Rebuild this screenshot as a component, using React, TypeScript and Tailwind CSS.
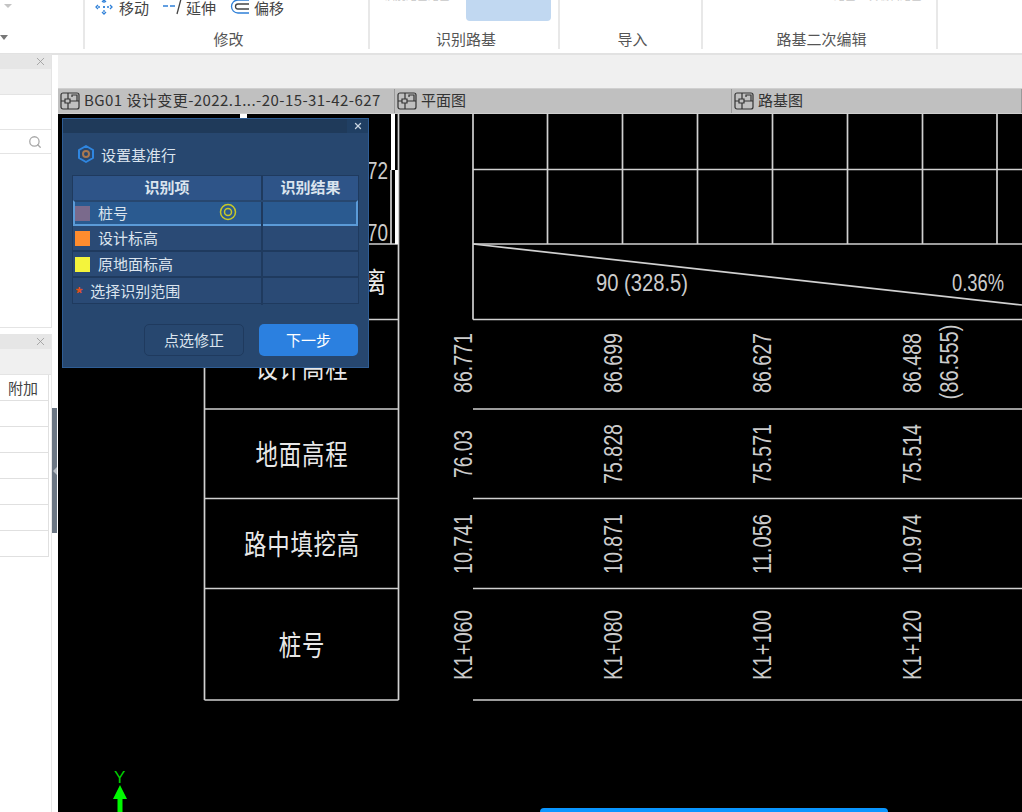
import { Search, X } from "lucide-react";

const FONT = "font-['Noto_Sans_CJK_SC','Noto_Sans',sans-serif]";

const groups = [
  { label: "修改", width: "w-[285px]" },
  { label: "识别路基", width: "w-[190px]" },
  { label: "导入", width: "w-[143px]" },
  { label: "路基二次编辑", width: "w-[235px]" },
];

const tabs = [
  { label: "BG01 设计变更-2022.1...-20-15-31-42-627", width: "w-[337px] tracking-[0.44px]" },
  { label: "平面图", width: "w-[337px]" },
  { label: "路基图", width: "flex-1" },
];

const rows = [
  { label: "桩号", color: "bg-[#7a6a8c]", active: true },
  { label: "设计标高", color: "bg-[#ff8c2e]" },
  { label: "原地面标高", color: "bg-[#f4f43c]" },
];

const columns = [
  { x: 463, values: ["86.771", "76.03", "10.741", "K1+060"] },
  { x: 613, values: ["86.699", "75.828", "10.871", "K1+080"] },
  { x: 762, values: ["86.627", "75.571", "11.056", "K1+100"] },
  { x: 912, values: ["86.488", "75.514", "10.974", "K1+120"] },
];

const rowCenters = [363, 454, 544, 645];
const gridX = [473, 547.5, 622.5, 697.5, 772.5, 847.5, 922.5, 997];
const hLines = [244, 319.5, 409, 498.5, 588.5, 700];

function TabIcon() {
  return (
    <svg width="20" height="18" viewBox="0 0 20 18" fill="none" stroke="#333" strokeWidth="1.2" className="shrink-0">
      <rect x="1" y="1" width="18" height="16" rx="2" />
      <path d="M1 9h4M5 7h5v4H5zM10 9h9M8 1v6M8 11v6M12 5V3h5v6" />
    </svg>
  );
}

function MoveIcon() {
  return (
    <svg width="18" height="16" viewBox="0 0 18 16" fill="none" stroke="#2f80d8" strokeWidth="1.3">
      <path d="M9 2v3M9 7v2M9 11v3M3 8h3M8 8h2M12 8h3" strokeDasharray="2 1" />
      <path d="M7 3l2-2 2 2M7 13l2 2 2-2M3 6L1 8l2 2M15 6l2 2-2 2" />
    </svg>
  );
}

function ExtendIcon() {
  return (
    <svg width="20" height="16" viewBox="0 0 20 16" fill="none" stroke="#2f80d8" strokeWidth="1.3">
      <path d="M1 7h5M8 7h5" />
      <path d="M19 0l-4 15" stroke="#444" />
    </svg>
  );
}

function OffsetIcon() {
  return (
    <svg width="20" height="16" viewBox="0 0 20 16" fill="none" stroke="#2f80d8" strokeWidth="1.3">
      <path d="M19 1H8a6.500 6.500 0 0 0 0 13h11" />
      <path d="M19 5H8a2.500 2.500 0 0 0 0 5h11" stroke="#444" />
    </svg>
  );
}

function Ribbon() {
  return (
    <div className="flex h-[55px] shrink-0 overflow-hidden border-b-2 border-[#e2e2e2] bg-white">
      <div className="relative h-[49px] w-[85px] shrink-0 border-r-2 border-[#e8e8e8]">
        <span className="absolute left-[4px] top-[4px] h-0 w-0 border-x-[4px] border-t-[4px] border-x-transparent border-t-[#c4c4c4]" />
        <span className="absolute left-0 top-[35px] h-0 w-0 border-x-[4px] border-t-[5px] border-x-transparent border-t-[#777]" />
      </div>
      {groups.map((g, i) => (
        <div key={g.label} className={`flex h-[49px] shrink-0 flex-col border-r-2 border-[#e8e8e8] ${g.width}`}>
          <div className="relative h-[30px] overflow-hidden">
            {i === 0 && (
              <div className="-mt-[2px] flex h-[18px] items-center pl-[10px] text-[15px] leading-none text-[#444]">
                <MoveIcon />
                <span className="ml-[6px]">移动</span>
                <span className="ml-[13px]"><ExtendIcon /></span>
                <span className="ml-[4px]">延伸</span>
                <span className="ml-[14px]"><OffsetIcon /></span>
                <span className="ml-[4px]">偏移</span>
              </div>
            )}
            {i === 1 && (
              <div className="flex h-[21px] items-start pl-[14px]">
                <span className="-mt-[11px] w-[82px] text-[11px] leading-[12px] text-[#c8c8c8]">识别路基路基</span>
                <div className="h-[21px] w-[85px] rounded-b-[4px] bg-[#c1d8f1]" />
              </div>
            )}
            {i === 3 && (
              <div className="-mt-[11px] pl-[131px] text-[11px] leading-[12px] text-[#c8c8c8]">路基二次编辑路基</div>
            )}
          </div>
          <div className="pl-[4px] text-center text-[15px] leading-[18px] text-[#555]">{g.label}</div>
        </div>
      ))}
    </div>
  );
}

function PanelHead() {
  return (
    <>
      <div className="flex h-[15px] items-center justify-end bg-[#e6e6e6] pr-[4px]">
        <X size={13} className="text-[#999]" strokeWidth={1.5} />
      </div>
      <div className="h-[26px] border-b border-[#e4e4e4] bg-[#f0f0f0]" />
    </>
  );
}

function LeftColumn() {
  return (
    <div className="relative flex w-[58px] shrink-0 flex-col bg-white">
      <div className="-mt-[1px] w-[52px] border-r border-[#e4e4e4]">
        <PanelHead />
        <div className="h-[35px] border-b border-[#e4e4e4]" />
        <div className="flex h-[24px] items-center justify-end border-b border-[#e4e4e4] pr-[9px]">
          <Search size={14} className="text-[#a8a8a8]" strokeWidth={2.2} />
        </div>
        <div className="h-[174px] border-b border-[#e4e4e4]" />
      </div>
      <div className="mt-[6px] w-[52px] flex-1 border-r border-[#e8e8e8]">
        <PanelHead />
        <div className="mr-[2px] border-r border-[#e0e0e0]">
          <div className="flex h-[26px] items-center justify-end border-b border-[#e0e0e0] pr-[10px] pt-[2px] text-[15px] text-[#444]">附加</div>
          {[0, 1, 2, 3, 4, 5].map((n) => (
            <div key={n} className="h-[26px] border-b border-[#e0e0e0]" />
          ))}
        </div>
      </div>
      <div className="absolute left-[52px] top-[353px] flex h-[125px] w-[5px] items-center justify-center bg-[#6b7683]">
        <span className="h-0 w-0 border-y-[4px] border-r-[4px] border-y-transparent border-r-[#b8bec5]" />
      </div>
    </div>
  );
}

function Tabs() {
  return (
    <div className="flex h-[26px] shrink-0 border-y border-[#d0d0d0] bg-[#c0c0c0]">
      {tabs.map((t) => (
        <div key={t.label} className={`flex items-center gap-[4px] whitespace-nowrap border-r border-[#999] pl-[2px] text-[15px] text-[#333] ${t.width}`}>
          <TabIcon />
          <span className="pb-[2px]">{t.label}</span>
        </div>
      ))}
    </div>
  );
}

function VText({ x, y, len, size = 25, children }: { x: number; y: number; len: number; size?: number; children: string }) {
  return (
    <text
      transform={`translate(${x + 9} ${y}) rotate(-90)`}
      textAnchor="middle"
      fontSize={size}
      textLength={len}
      lengthAdjust="spacingAndGlyphs"
      fill="#cccccc"
      fontFamily="'Liberation Sans', sans-serif"
    >
      {children}
    </text>
  );
}

function Label({ x, y, children }: { x: number; y: number; children: string }) {
  return (
    <text
      transform={`translate(${x} ${y}) scale(0.8 1)`}
      textAnchor="middle"
      fontSize="28"
      letterSpacing="1"
      fill="#e8e8e8"
      fontFamily="'Noto Sans CJK SC', sans-serif"
    >
      {children}
    </text>
  );
}

function Drawing() {
  return (
    <svg width="964" height="698" viewBox="58 114 964 698" className="block">
      <g stroke="#d0d0d0" strokeWidth="1.700" fill="none">
        {gridX.map((x) => (
          <line key={x} x1={x} y1="114" x2={x} y2="244" />
        ))}
        <line x1="473" y1="169.500" x2="1022" y2="169.500" />
        {hLines.map((y) => (
          <line key={y} x1="473" y1={y} x2="1022" y2={y} />
        ))}
        <line x1="473" y1="244" x2="473" y2="319.500" />
        <line x1="473" y1="244" x2="1022" y2="305" />
        {hLines.map((y) => (
          <line key={y} x1="204.500" y1={y} x2="398.500" y2={y} />
        ))}
        <line x1="204.500" y1="244" x2="204.500" y2="700" />
        <line x1="398.500" y1="114" x2="398.500" y2="700" />
        <line x1="391" y1="170" x2="391" y2="244" />
      </g>
      <rect x="391" y="114" width="4" height="56" fill="#fff" />
      <rect x="395" y="170" width="3" height="74" fill="#fff" />
      <rect x="240" y="114" width="7" height="4" fill="#fff" />

      <text x="367" y="179" fontSize="24" textLength="21" lengthAdjust="spacingAndGlyphs" fill="#cccccc" fontFamily="'Liberation Sans', sans-serif">72</text>
      <text x="367" y="241" fontSize="24" textLength="21" lengthAdjust="spacingAndGlyphs" fill="#cccccc" fontFamily="'Liberation Sans', sans-serif">70</text>
      <text x="596" y="291" fontSize="24" textLength="92" lengthAdjust="spacingAndGlyphs" fill="#cccccc" fontFamily="'Liberation Sans', sans-serif">90 (328.5)</text>
      <text x="952" y="291" fontSize="24" textLength="52" lengthAdjust="spacingAndGlyphs" fill="#cccccc" fontFamily="'Liberation Sans', sans-serif">0.36%</text>

      <Label x={375} y={293}>离</Label>
      <Label x={302} y={378}>设计高程</Label>
      <Label x={302} y={465}>地面高程</Label>
      <Label x={302} y={555}>路中填挖高</Label>
      <Label x={302} y={656}>桩号</Label>

      {columns.map((c) =>
        c.values.map((v, i) => (
          <VText key={v} x={c.x} y={rowCenters[i]} len={v.length === 5 ? 48 : i === 3 ? 70 : 60}>
            {v}
          </VText>
        )),
      )}
      <VText x={949} y={362} len={75}>(86.555)</VText>

      <text x="114" y="783" fontSize="17" fill="#00d000" fontFamily="'Liberation Sans', sans-serif">Y</text>
      <path d="M120 785l7 14h-4.500v13h-5v-13h-4.500z" fill="#00f800" />
    </svg>
  );
}

function Dialog() {
  return (
    <div className="absolute left-[4px] top-[4px] h-[250px] w-[307px] border border-[#2f5d94] bg-[#27476f] text-[#dbe4ee]">
      <div className="flex h-[14px] justify-end bg-[#1f3a5a]">
        <div className="flex w-[21px] items-center justify-center bg-[#203f63]">
          <X size={10} strokeWidth={3} className="text-[#c8d4e0]" />
        </div>
      </div>
      <div className="flex h-[42px] items-center gap-[6px] pl-[14px] pt-[2px] text-[15px]">
        <svg width="18" height="18" viewBox="0 0 18 18" fill="none" className="-mt-[2px]">
          <path d="M9 1l7 4v8l-7 4-7-4V5z" stroke="#2f86e0" strokeWidth="2" strokeLinejoin="round" />
          <circle cx="9" cy="9" r="3" stroke="#a87850" strokeWidth="2" />
        </svg>
        <span>设置基准行</span>
      </div>
      <div className="mx-[9px] border border-[#1f3a5e]">
        <div className="grid h-[24px] grid-cols-[190px_1fr] bg-[#2e5488] text-center text-[15px] font-bold leading-[22px]">
          <div className="border-r-2 border-[#1f3a5e]">识别项</div>
          <div>识别结果</div>
        </div>
        {rows.map((r) => (
          <div
            key={r.label}
            className={`relative grid h-[26px] text-[15px] ${r.active ? "grid-cols-[188px_1fr] border-2 border-[#5b9bd8] border-t-[#27476f] bg-[#2a5a90]" : "grid-cols-[190px_1fr] border-b-2 border-[#1f3a5e] bg-[#2a4a75]"}`}
          >
            <div className={`flex items-center gap-[8px] border-r-2 border-[#1f3a5e] ${r.active ? "pb-[2px]" : "pl-[2px]"}`}>
              <span className={`h-[15px] w-[15px] ${r.color}`} />
              <span>{r.label}</span>
            </div>
            {r.active && (
              <svg width="18" height="18" viewBox="0 0 18 18" fill="none" stroke="#c8c828" strokeWidth="1.500" className="absolute left-[144px] top-[1px]">
                <circle cx="9" cy="9" r="7.500" />
                <circle cx="9" cy="9" r="3.500" />
              </svg>
            )}
          </div>
        ))}
        <div className="grid h-[25px] grid-cols-[190px_1fr] bg-[#2a4a75] text-[15px]">
          <div className="flex items-center gap-[7px] border-r-2 border-[#1f3a5e] pl-[2px]">
            <span className="mt-[3px] text-[16px] font-bold text-[#e0501c]">*</span>
            <span>选择识别范围</span>
          </div>
        </div>
      </div>
      <div className="mt-[20px] flex justify-end gap-[15px] pr-[10px] text-[15px]">
        <div className="flex h-[32px] w-[100px] items-center justify-center rounded-[5px] border border-[#1f3a5e]">点选修正</div>
        <div className="flex h-[32px] w-[99px] items-center justify-center rounded-[5px] bg-[#2b80e0] text-white">下一步</div>
      </div>
    </div>
  );
}

export default function App() {
  return (
    <div className={`flex h-[812px] w-[1022px] flex-col overflow-hidden bg-white ${FONT}`}>
      <Ribbon />
      <div className="flex min-h-0 flex-1">
        <LeftColumn />
        <div className="flex min-w-0 flex-1 flex-col">
          <div className="h-[33px] shrink-0 bg-[#f0f0f0]" />
          <Tabs />
          <div className="relative min-h-0 flex-1 overflow-hidden bg-black">
            <Drawing />
            <Dialog />
            <div className="absolute bottom-0 left-[482px] h-[4px] w-[348px] rounded-t-[4px] bg-[#0a96ff]" />
          </div>
        </div>
      </div>
    </div>
  );
}
